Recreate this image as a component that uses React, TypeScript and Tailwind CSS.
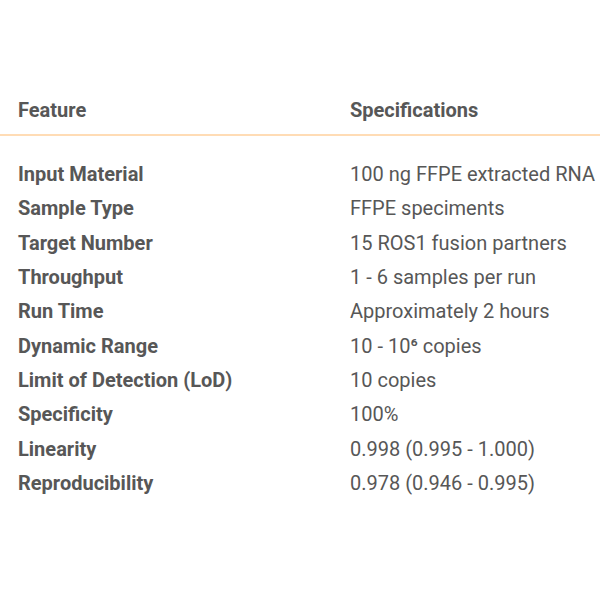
import React from "react";

const rows: [string, React.ReactNode][] = [
  ["Input Material", "100 ng FFPE extracted RNA"],
  ["Sample Type", "FFPE speciments"],
  ["Target Number", "15 ROS1 fusion partners"],
  ["Throughput", "1 - 6 samples per run"],
  ["Run Time", "Approximately 2 hours"],
  ["Dynamic Range", <>10 - 10⁶ copies</>],
  ["Limit of Detection (LoD)", "10 copies"],
  ["Specificity", "100%"],
  ["Linearity", "0.998 (0.995 - 1.000)"],
  ["Reproducibility", "0.978 (0.946 - 0.995)"],
];

export default function App() {
  return (
    <div
      className="w-[600px] h-[600px] bg-white text-[#575757] text-[20px] pt-[93px]"
      style={{ fontFamily: "Roboto, 'Liberation Sans', sans-serif" }}
    >
      <div className="grid grid-cols-[332px_1fr] pl-[18px] pb-[7px] border-b-2 border-[#ffdcb5] font-bold leading-[34px]">
        <div>Feature</div>
        <div>Specifications</div>
      </div>
      <div className="pt-[21px] pl-[18px]">
        {rows.map(([k, v]) => (
          <div key={k} className="grid grid-cols-[332px_1fr] leading-[34.33px]">
            <div className="font-bold">{k}</div>
            <div>{v}</div>
          </div>
        ))}
      </div>
    </div>
  );
}
